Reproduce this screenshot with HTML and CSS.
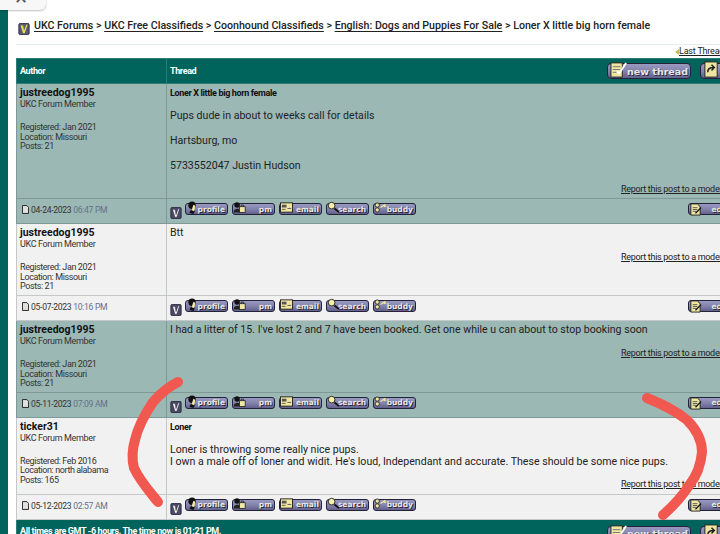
FILE: index.html
```html
<!DOCTYPE html>
<html lang="en">
<head>
<meta charset="utf-8">
<title>Loner X little big horn female</title>
<link rel="stylesheet" href="styles.css">
</head>
<body>
<svg class="defs" width="0" height="0" aria-hidden="true">
  <symbol id="i-v" viewBox="0 0 13 14"><rect x=".5" y=".5" width="12" height="13" rx="1.5" fill="#4a4a68" stroke="#22223a"/><path d="M2.5 3h3l1 6 2.6-7h1.6l-3.4 10H5.4z" fill="#f4f4f4" stroke="#111" stroke-width=".4"/></symbol>
  <symbol id="i-vy" viewBox="0 0 13 14"><rect x=".5" y=".5" width="12" height="13" rx="1.5" fill="#5a5a78" stroke="#22223a"/><path d="M2.5 3h3l1 6 2.6-7h1.6l-3.4 10H5.4z" fill="#e8dc50"/></symbol>
  <symbol id="i-profile" viewBox="0 0 12 14"><circle cx="5.5" cy="4.5" r="4" fill="#111"/><path d="M3 13c0-4 4-5 6-3l-2 4z" fill="#111"/><path d="M7 4l2 1-1 6-3-1z" fill="#f2e9a8"/></symbol>
  <symbol id="i-pm" viewBox="0 0 16 14"><circle cx="5" cy="4" r="3.4" fill="#111"/><path d="M1 12c0-4 7-5 8-1v2H1z" fill="#222"/><rect x="8" y="6" width="7" height="7" fill="#f0e8a8" stroke="#222"/><path d="M10 6V4h3v2" fill="none" stroke="#222"/></symbol>
  <symbol id="i-email" viewBox="0 0 14 12"><rect x=".5" y="1" width="13" height="10" fill="#f0e6a0" stroke="#222"/><path d="M2 3h5v3H2z" fill="#555"/><path d="M8 7h4M2 8h4" stroke="#555"/></symbol>
  <symbol id="i-search" viewBox="0 0 14 14"><circle cx="5" cy="5" r="3.6" fill="#f6efb0" stroke="#222"/><path d="M8 8l5 4" stroke="#111" stroke-width="2"/></symbol>
  <symbol id="i-buddy" viewBox="0 0 16 14"><circle cx="4" cy="4" r="2.6" fill="#f0e6a0" stroke="#222"/><circle cx="4" cy="10" r="2.6" fill="#f0e6a0" stroke="#222"/><path d="M8 7l6-4M12 6l3-1" stroke="#f0e6a0" stroke-width="1.6"/></symbol>
  <symbol id="i-edit" viewBox="0 0 14 14"><path d="M2 1h7l3 3v9H2z" fill="#eee6a0" stroke="#222"/><path d="M4 5h5M4 7h5M4 9h4" stroke="#555"/><path d="M7 11l6-6" stroke="#111" stroke-width="1.4"/></symbol>
  <symbol id="i-new" viewBox="0 0 18 18"><rect x="1" y="2" width="12" height="15" fill="#eee6a0" stroke="#222"/><path d="M3 6h8M3 9h8M3 12h6" stroke="#777"/><path d="M7 11l3 2 7-11" fill="none" stroke="#fff" stroke-width="2"/></symbol>
  <symbol id="i-reply" viewBox="0 0 18 18"><rect x="2" y="1" width="13" height="16" fill="#eee6a0" stroke="#222"/><path d="M5 12c0-4 3-5 6-5M9 4l3 3-3 3" fill="none" stroke="#222" stroke-width="1.6"/></symbol>
  <symbol id="i-page" viewBox="0 0 8 10"><path d="M.5.5h5l2 2v7h-7z" fill="#e0e0e0" stroke="#111"/></symbol>
</svg>

<div class="popup"><span class="popup-x">×</span></div>

<div class="page">
  <div class="strip"></div>
  <main class="content">
    <nav class="crumbs">
      <svg class="crumb-icon"><use href="#i-vy"/></svg>
      <span class="crumb-text"><a>UKC Forums</a> &gt; <a>UKC Free Classifieds</a> &gt; <a>Coonhound Classifieds</a> &gt; <a>English: Dogs and Puppies For Sale</a> &gt; Loner X little big horn female</span>
    </nav>
    <div class="pager"><span class="tri"></span><a>Last Thread</a> &nbsp;<a>Next Thread</a></div>

    <table class="thread">
      <colgroup><col class="c-author"><col class="c-post"></colgroup>
      <thead>
        <tr class="head">
          <th>Author</th>
          <th><div class="head-row"><span>Thread</span><span class="big-btns"><span class="bigbtn"><svg><use href="#i-new"/></svg>new thread</span><span class="bigbtn"><svg><use href="#i-reply"/></svg>post reply</span></span></div></th>
        </tr>
      </thead>
      <tbody>
        <tr class="alt r1">
          <td class="author"><b>justreedog1995</b><span>UKC Forum Member</span><small>Registered: Jan 2021<br>Location: Missouri<br>Posts: 21</small></td>
          <td class="post"><div class="subject">Loner X little big horn female</div>
            <p class="body1">Pups dude in about to weeks call for details</p><p class="body1">Hartsburg, mo</p><p class="body1">5733552047 Justin Hudson</p>
            <a class="report">Report this post to a moderator</a></td>
        </tr>
        <tr class="alt foot">
          <td class="date"><svg class="page-ic"><use href="#i-page"/></svg>04-24-2023 <i>06:47 PM</i></td>
          <td class="tools"><div class="toolrow"><svg class="v"><use href="#i-v"/></svg><span class="b"><svg><use href="#i-profile"/></svg>profile</span><span class="b pm"><svg><use href="#i-pm"/></svg>pm</span><span class="b"><svg><use href="#i-email"/></svg>email</span><span class="b"><svg><use href="#i-search"/></svg>search</span><span class="b"><svg><use href="#i-buddy"/></svg>buddy</span><span class="b edit"><svg><use href="#i-edit"/></svg>edit</span></div></td>
        </tr>
        <tr class="light r2">
          <td class="author"><b>justreedog1995</b><span>UKC Forum Member</span><small>Registered: Jan 2021<br>Location: Missouri<br>Posts: 21</small></td>
          <td class="post"><div class="plain">Btt</div><a class="report">Report this post to a moderator</a></td>
        </tr>
        <tr class="light foot">
          <td class="date"><svg class="page-ic"><use href="#i-page"/></svg>05-07-2023 <i>10:16 PM</i></td>
          <td class="tools"><div class="toolrow"><svg class="v"><use href="#i-v"/></svg><span class="b"><svg><use href="#i-profile"/></svg>profile</span><span class="b pm"><svg><use href="#i-pm"/></svg>pm</span><span class="b"><svg><use href="#i-email"/></svg>email</span><span class="b"><svg><use href="#i-search"/></svg>search</span><span class="b"><svg><use href="#i-buddy"/></svg>buddy</span><span class="b edit"><svg><use href="#i-edit"/></svg>edit</span></div></td>
        </tr>
        <tr class="alt r3">
          <td class="author"><b>justreedog1995</b><span>UKC Forum Member</span><small>Registered: Jan 2021<br>Location: Missouri<br>Posts: 21</small></td>
          <td class="post"><div class="plain">I had a litter of 15. I've lost 2 and 7 have been booked. Get one while u can about to stop booking soon</div><a class="report">Report this post to a moderator</a></td>
        </tr>
        <tr class="alt foot">
          <td class="date"><svg class="page-ic"><use href="#i-page"/></svg>05-11-2023 <i>07:09 AM</i></td>
          <td class="tools"><div class="toolrow"><svg class="v"><use href="#i-v"/></svg><span class="b"><svg><use href="#i-profile"/></svg>profile</span><span class="b pm"><svg><use href="#i-pm"/></svg>pm</span><span class="b"><svg><use href="#i-email"/></svg>email</span><span class="b"><svg><use href="#i-search"/></svg>search</span><span class="b"><svg><use href="#i-buddy"/></svg>buddy</span><span class="b edit"><svg><use href="#i-edit"/></svg>edit</span></div></td>
        </tr>
        <tr class="light r4">
          <td class="author"><b>ticker31</b><span>UKC Forum Member</span><small>Registered: Feb 2016<br>Location: north alabama<br>Posts: 165</small></td>
          <td class="post"><div class="subject">Loner</div>
            <div class="plain gap">Loner is throwing some really nice pups.<br>I own a male off of loner and widit. He's loud, Independant and accurate. These should be some nice pups.</div>
            <a class="report">Report this post to a moderator</a></td>
        </tr>
        <tr class="light foot">
          <td class="date"><svg class="page-ic"><use href="#i-page"/></svg>05-12-2023 <i>02:57 AM</i></td>
          <td class="tools"><div class="toolrow"><svg class="v"><use href="#i-v"/></svg><span class="b"><svg><use href="#i-profile"/></svg>profile</span><span class="b pm"><svg><use href="#i-pm"/></svg>pm</span><span class="b"><svg><use href="#i-email"/></svg>email</span><span class="b"><svg><use href="#i-search"/></svg>search</span><span class="b"><svg><use href="#i-buddy"/></svg>buddy</span><span class="b edit"><svg><use href="#i-edit"/></svg>edit</span></div></td>
        </tr>
        <tr class="head tail">
          <td colspan="2"><div class="head-row"><span class="tail-note">All times are GMT -6 hours. The time now is 01:21 PM.</span><span class="big-btns"><span class="bigbtn"><svg><use href="#i-new"/></svg>new thread</span><span class="bigbtn"><svg><use href="#i-reply"/></svg>post reply</span></span></div></td>
        </tr>
      </tbody>
    </table>
  </main>
</div>

<svg class="scribble" viewBox="0 0 720 534" aria-hidden="true">
  <path d="M178 382C168 387 160 394 153 402C145 414 138 426 135 440C132 450 132 460 134 468C140 481 150 492 158 502" />
  <path d="M647 398C662 404 676 411 687 420C697 430 702 440 702 452C701 463 698 474 690 484C682 497 672 507 663 515" />
</svg>
</body>
</html>
```
FILE: styles.css
```css
* { box-sizing: border-box; }
html, body { margin: 0; padding: 0; width: 720px; height: 534px; overflow: hidden; background: #fff; }
body { font-family: Roboto, "Liberation Sans", sans-serif; color: #222; position: relative; }
.defs { position: absolute; }

.popup { position: absolute; left: -6px; top: -10px; width: 52px; height: 20px; background: #f7f7f7; border-radius: 0 0 6px 6px; box-shadow: 0 1px 2px rgba(0,0,0,.25); z-index: 3; display: flex; justify-content: center; }
.popup-x { font-size: 22px; line-height: 16px; color: #555; padding-left: 2px; }

.page { display: flex; width: 900px; height: 534px; }
.strip { width: 8px; margin-top: 10px; background: #00645c; flex: none; }
.content { flex: none; width: 892px; padding-left: 8px; }

.crumbs { height: 45px; border-bottom: 1px solid #e4eceb; display: flex; align-items: flex-start; padding-left: 2px; font-size: 10.65px; font-weight: 500; color: #222; white-space: nowrap; }
.crumb-icon { width: 12px; height: 12px; margin: 23px 4px 0 0; flex: none; }
.crumb-text { margin-top: 19px; line-height: 14px; }
.crumbs a { text-decoration: underline; text-decoration-thickness: 1px; text-underline-offset: 2px; }

.pager { height: 13px; font-size: 9px; letter-spacing: -.2px; line-height: 13px; padding-left: 656px; white-space: nowrap; display: flex; align-items: center; }
.pager a { text-decoration: underline; }
.pager .tri { width: 0; height: 0; border: 3.5px solid transparent; border-right: 4px solid #c9bd50; margin-right: 0; }

.thread { border-collapse: collapse; table-layout: fixed; width: 884px; }
.c-author { width: 150px; }
.thread td, .thread th { padding: 0; border: 1px solid #7f9a96; vertical-align: top; }
.thread .head th, .thread .head td { background: #00645c; color: #fff; border-color: #2f7c75; font-size: 9px; letter-spacing: -.38px; font-weight: 700; text-align: left; height: 25px; padding: 0 0 0 3px; vertical-align: middle; }
.head-row { display: flex; align-items: center; justify-content: space-between; height: 24px; width: 100%; }
.thread th .head-row { width: 614px; }
.thread .tail td { height: 30px; vertical-align: top; }
.tail .head-row { width: 764px; }
.tail .big-btns { margin-top: 4px; }
.tail-note { margin-top: -2px; }
.big-btns { display: flex; gap: 9px; flex: none; }

.bigbtn { display: inline-flex; align-items: center; justify-content: flex-end; width: 84px; height: 16px; padding: 0 2px 0 0; border-radius: 4px; border: 1px solid #22223a; background: linear-gradient(#9a99c0, #8180aa 55%, #62608c); color: #e6e6e6; font-family: "DejaVu Sans", sans-serif; font-size: 9.5px; letter-spacing: 0; font-weight: 700; white-space: nowrap; text-shadow: 1px 1px 0 #2a2a3a; position: relative; }
.bigbtn svg { position: absolute; left: 2px; top: -3px; width: 17px; height: 17px; }

.alt td { background: #9bb8b5; }
.light td { background: #f1f1f1; border-color: #c4c8c8; }
.author { padding: 3px 3px !important; }
.author b { display: block; font-size: 10.5px; line-height: 12px; font-weight: 700; color: #111; }
.author span { display: block; font-size: 9px; letter-spacing: -.35px; line-height: 10px; color: #333; }
.author small { display: block; font-size: 9px; letter-spacing: -.4px; line-height: 9.6px; color: #333; margin-top: 14px; }
.post { position: relative; padding: 4px 3px !important; }
.subject { font-size: 9px; letter-spacing: -.35px; line-height: 10px; font-weight: 700; color: #111; }
.body1 { font-size: 10.6px; line-height: 14px; margin: 11px 0; color: #222; }
.plain { font-size: 10.6px; line-height: 12px; color: #222; margin-top: -1px; }
.plain.gap { margin-top: 12px; }
.report { display: block; margin-left: 451px; font-size: 9px; letter-spacing: -.3px; line-height: 10px; text-decoration: underline; white-space: nowrap; color: #222; }
.r1 .post { height: 115px; } .r1 .report { margin-top: 4px; }
.r2 .post { height: 72px; } .r2 .report { margin-top: 13px; }
.r3 .post { height: 71px; } .r3 .report { margin-top: 12px; }
.r4 .post { height: 77px; } .r4 .report { margin-top: 11px; }

.foot td { height: 25px; }
.date { font-size: 8.6px; letter-spacing: -.3px; line-height: 23px; padding-left: 5px !important; color: #333; white-space: nowrap; }
.date i { font-style: normal; color: #667089; }
.page-ic { width: 7px; height: 9px; margin-right: 2px; vertical-align: -1px; }

.toolrow { display: flex; align-items: flex-start; gap: 4px; padding: 3px 0 0 3px; height: 24px; width: 660px; position: relative; }
.v { width: 12px; height: 12px; margin: 5px -1px 0 0; flex: none; }
.b { display: inline-flex; align-items: center; justify-content: flex-end; width: 43px; height: 12px; margin-top: 1px; padding-right: 2px; border: 1px solid #22223a; border-radius: 3px; background: linear-gradient(#9a99c0, #8180aa 55%, #62608c); color: #e6e6e6; font-family: "DejaVu Sans", sans-serif; font-size: 7.5px; font-weight: 700; position: relative; text-shadow: 1px 1px 0 #2a2a3a; }
.b svg { position: absolute; left: 0; top: -3px; width: 13px; height: 13px; }
.b.edit { position: absolute; left: 521px; top: 3px; margin-top: 1px; }
.b.edit svg { top: -1px; }

.scribble { position: absolute; left: 0; top: 0; width: 720px; height: 534px; z-index: 2; pointer-events: none; }
.scribble path { fill: none; stroke: #f15850; stroke-width: 10px; stroke-linecap: round; stroke-linejoin: round; }
```
